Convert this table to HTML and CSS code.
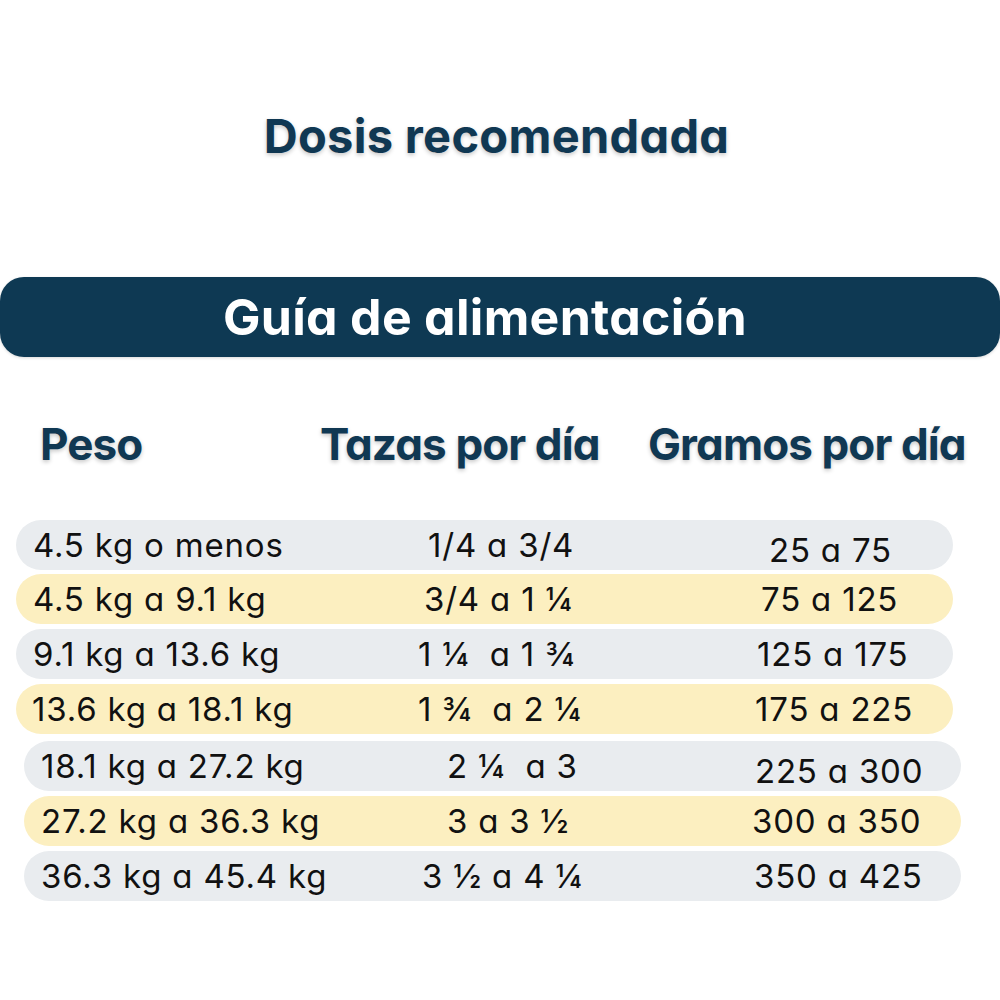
FILE: index.html
```html
<!DOCTYPE html>
<html lang="es">
<head>
<meta charset="utf-8">
<title>Dosis recomendada</title>
<link rel="stylesheet" href="styles.css">
</head>
<body>
<main class="page">
  <header class="title-block">
    <h1 class="title">Dosis recomendada</h1>
  </header>
  <div class="banner">
    <h2 class="banner-text">Guía de alimentación</h2>
  </div>
  <div class="heads">
    <span class="head">Peso</span>
    <span class="head">Tazas por día</span>
    <span class="head">Gramos por día</span>
  </div>
  <div class="rows">
    <div class="row grey r1"><span>4.5 kg o menos</span><span>1/4 a 3/4</span><span class="low">25 a 75</span></div>
    <div class="row yellow r2"><span>4.5 kg a 9.1 kg</span><span>3/4 a 1 ¼</span><span>75 a 125</span></div>
    <div class="row grey r3"><span>9.1 kg a 13.6 kg</span><span>1 ¼  a 1 ¾</span><span>125 a 175</span></div>
    <div class="row yellow r4"><span>13.6 kg a 18.1 kg</span><span>1 ¾  a 2 ¼</span><span>175 a 225</span></div>
    <div class="row grey r5"><span>18.1 kg a 27.2 kg</span><span>2 ¼  a 3</span><span class="low">225 a 300</span></div>
    <div class="row yellow r6"><span>27.2 kg a 36.3 kg</span><span>3 a 3 ½</span><span>300 a 350</span></div>
    <div class="row grey r7"><span>36.3 kg a 45.4 kg</span><span>3 ½ a 4 ¼</span><span>350 a 425</span></div>
  </div>
</main>
</body>
</html>
```

FILE: styles.css
```css
* { box-sizing: border-box; }

html, body {
  margin: 0;
  padding: 0;
  background: #ffffff;
}

body {
  font-family: Inter, "Liberation Sans", sans-serif;
  font-feature-settings: "cv11" 1;
  color: #111111;
  width: 1000px;
  height: 1000px;
  overflow: hidden;
}

.page {
  display: flex;
  flex-direction: column;
}

.title-block {
  height: 277px;
  padding-top: 108px;
  padding-right: 7px;
  display: flex;
  justify-content: center;
}

.title {
  margin: 0;
  font-size: 47px;
  line-height: 56px;
  font-weight: 700;
  letter-spacing: 0.3px;
  color: #103853;
  text-shadow: 0 2px 4px rgba(0, 0, 0, 0.22);
}

.banner {
  height: 80px;
  background: #0e3953;
  border-radius: 24px;
  display: flex;
  align-items: center;
  justify-content: center;
  padding-right: 30px;
  box-shadow: 0 1px 3px rgba(0, 0, 0, 0.15);
}

.banner-text {
  margin: 0;
  font-size: 50px;
  line-height: 60px;
  font-weight: 700;
  letter-spacing: 0.3px;
  color: #ffffff;
}

.heads {
  display: grid;
  grid-template-columns: 280px 328px 1fr;
  padding-left: 40px;
  margin-top: 62px;
  height: 50px;
  align-items: center;
}

.head {
  font-size: 44px;
  line-height: 50px;
  font-weight: 700;
  color: #103853;
  letter-spacing: -0.9px;
  text-shadow: 0 2px 4px rgba(0, 0, 0, 0.22);
}

.rows {
  margin-top: 51px;
  display: flex;
  flex-direction: column;
}

.row {
  height: 50px;
  border-radius: 25px;
  display: grid;
  align-items: center;
  font-size: 33px;
  line-height: 40px;
  letter-spacing: 0.8px;
  color: #111111;
  white-space: pre;
}

.grey { background: #e9ecef; }
.yellow { background: #fcefc0; }

.low { transform: translateY(5px); }

.r1, .r2, .r3, .r4 { margin-left: 16px; width: 937px; padding-left: 17px; }
.r5, .r6, .r7 { margin-left: 24px; width: 937px; padding-left: 17px; }

.r1 { grid-template-columns: 395px 341px 1fr; margin-bottom: 4px; }
.r2 { grid-template-columns: 391px 337px 1fr; margin-bottom: 5px; }
.r3 { grid-template-columns: 385px 339px 1fr; margin-bottom: 5px; }
.r4 { grid-template-columns: 386px 337px 1fr; padding-left: 16px; margin-bottom: 7px; }
.r5 { grid-template-columns: 406px 308px 1fr; margin-bottom: 5px; }
.r6 { grid-template-columns: 406px 305px 1fr; margin-bottom: 5px; }
.r7 { grid-template-columns: 381px 332px 1fr; }
```
